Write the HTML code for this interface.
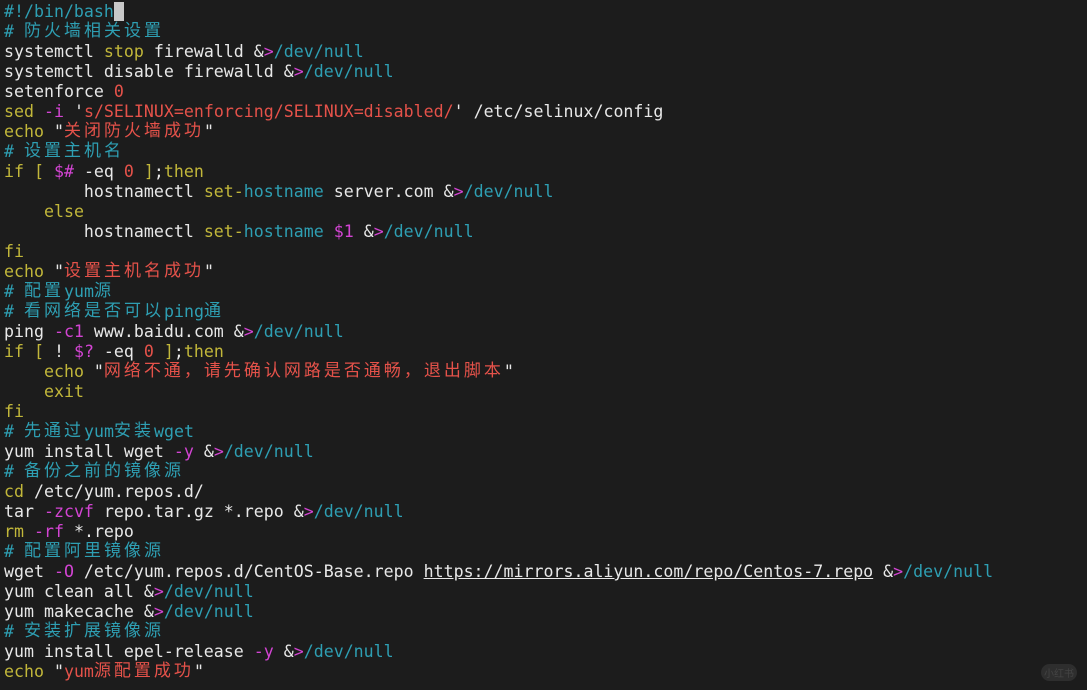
<!DOCTYPE html>
<html><head><meta charset="utf-8"><style>
html,body{margin:0;padding:0;background:#1c1c1c;width:1087px;height:690px;overflow:hidden}
pre{margin:0;padding:2px 0 0 4px;font-family:"DejaVu Sans Mono","Liberation Mono",monospace;font-size:16.6px;line-height:20px;color:#e8e8e8;white-space:pre}
.c{font-family:"Noto Sans CJK SC",sans-serif;font-size:17px;letter-spacing:3px;line-height:20px;display:inline-block;height:20px;vertical-align:top;position:relative;top:-3px}
.k{color:#c2b73a}.m{color:#d344d3}.r{color:#e5524a}.b{color:#2e9fb3}
.cur{background:#c8c8c8;color:#1c1c1c}
u{text-decoration:underline}
.badge{position:absolute;left:1041px;top:664px;width:36px;height:17px;border-radius:9px;background:#2e2e2e;color:#444;font:10px "Noto Sans CJK SC",sans-serif;text-align:center;line-height:17px}
</style></head><body>
<pre><span class="b">#!/bin/bash</span><span class="cur"> </span>
<span class="b"># <span class="c">防火墙相关设置</span></span>
systemctl <span class="k">stop</span> firewalld &amp;<span class="m">&gt;</span><span class="b">/dev/null</span>
systemctl disable firewalld &amp;<span class="m">&gt;</span><span class="b">/dev/null</span>
setenforce <span class="r">0</span>
<span class="k">sed</span> <span class="m">-i</span> '<span class="r">s/SELINUX=enforcing/SELINUX=disabled/</span>' /etc/selinux/config
<span class="k">echo</span> "<span class="r c">关闭防火墙成功</span>"
<span class="b"># <span class="c">设置主机名</span></span>
<span class="k">if [</span> <span class="m">$#</span> -eq <span class="r">0</span> <span class="k">]</span>;<span class="k">then</span>
        hostnamectl <span class="k">set-</span><span class="b">hostname</span> server.com &amp;<span class="m">&gt;</span><span class="b">/dev/null</span>
    <span class="k">else</span>
        hostnamectl <span class="k">set-</span><span class="b">hostname</span> <span class="m">$1</span> &amp;<span class="m">&gt;</span><span class="b">/dev/null</span>
<span class="k">fi</span>
<span class="k">echo</span> "<span class="r c">设置主机名成功</span>"
<span class="b"># <span class="c">配置</span>yum<span class="c">源</span></span>
<span class="b"># <span class="c">看网络是否可以</span>ping<span class="c">通</span></span>
ping <span class="m">-c1</span> www.baidu.com &amp;<span class="m">&gt;</span><span class="b">/dev/null</span>
<span class="k">if [</span> ! <span class="m">$?</span> -eq <span class="r">0</span> <span class="k">]</span>;<span class="k">then</span>
    <span class="k">echo</span> "<span class="r c">网络不通，请先确认网路是否通畅，退出脚本</span>"
    <span class="k">exit</span>
<span class="k">fi</span>
<span class="b"># <span class="c">先通过</span>yum<span class="c">安装</span>wget</span>
yum install wget <span class="m">-y</span> &amp;<span class="m">&gt;</span><span class="b">/dev/null</span>
<span class="b"># <span class="c">备份之前的镜像源</span></span>
<span class="k">cd</span> /etc/yum.repos.d/
tar <span class="m">-zcvf</span> repo.tar.gz *.repo &amp;<span class="m">&gt;</span><span class="b">/dev/null</span>
<span class="k">rm</span> <span class="m">-rf</span> *.repo
<span class="b"># <span class="c">配置阿里镜像源</span></span>
wget <span class="m">-O</span> /etc/yum.repos.d/CentOS-Base.repo <u>https://mirrors.aliyun.com/repo/Centos-7.repo</u> &amp;<span class="m">&gt;</span><span class="b">/dev/null</span>
yum clean all &amp;<span class="m">&gt;</span><span class="b">/dev/null</span>
yum makecache &amp;<span class="m">&gt;</span><span class="b">/dev/null</span>
<span class="b"># <span class="c">安装扩展镜像源</span></span>
yum install epel-release <span class="m">-y</span> &amp;<span class="m">&gt;</span><span class="b">/dev/null</span>
<span class="k">echo</span> "<span class="r">yum<span class="c">源配置成功</span></span>"</pre>
<div class="badge">小红书</div>
</body></html>
